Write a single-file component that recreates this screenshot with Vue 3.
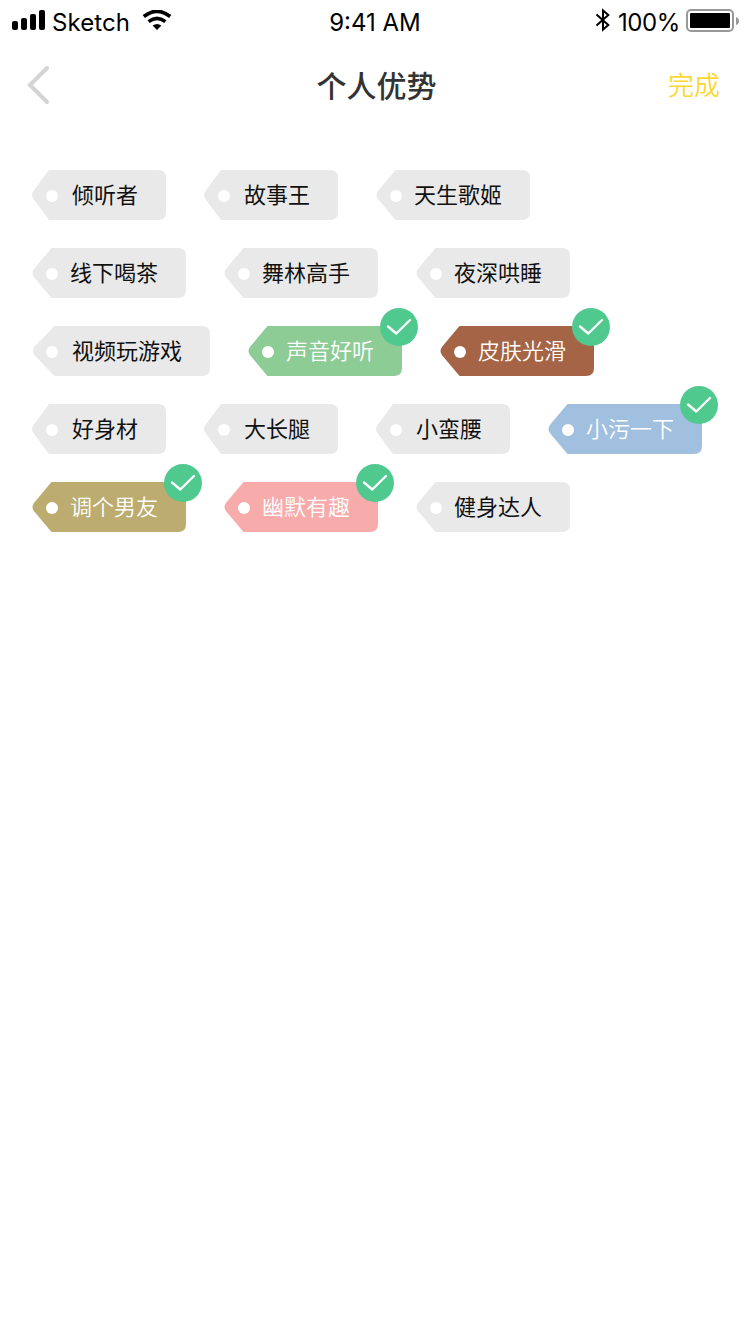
<script setup>
const rows = [
  [{ text: '倾听者' }, { text: '故事王' }, { text: '天生歌姬' }],
  [{ text: '线下喝茶' }, { text: '舞林高手' }, { text: '夜深哄睡' }],
  [{ text: '视频玩游戏' }, { text: '声音好听', color: '#8ecc95' }, { text: '皮肤光滑', color: '#a46445' }],
  [{ text: '好身材' }, { text: '大长腿' }, { text: '小蛮腰' }, { text: '小污一下', color: '#a1bfdf' }],
  [{ text: '调个男友', color: '#bcac6f' }, { text: '幽默有趣', color: '#f8abab' }, { text: '健身达人' }],
]

const sizes = {
  3: { width: 136, shoulder: 19, tip: 2, pad: 42 },
  4: { width: 156, shoulder: 21.5, tip: 2.5, pad: 40 },
  5: { width: 180, shoulder: 24.5, tip: 3, pad: 42 },
}
const sizeOf = (tag) => sizes[tag.text.length]

function outline(tag) {
  const { width: w, shoulder: s, tip: t } = sizeOf(tag)
  return `M${s} 0H${w - 8}Q${w} 0 ${w} 8V42Q${w} 50 ${w - 8} 50H${s}L${t + 1.8} 29.6Q${t - 1.8} 25 ${t + 1.8} 20.4Z`
}
</script>

<template>
  <main class="screen">
    <div class="status">
      <div class="side">
        <svg class="signal" width="34" height="20" viewBox="0 0 34 20">
          <rect x="0" y="11" width="6" height="9" rx="2" />
          <rect x="9" y="8" width="6" height="12" rx="2" />
          <rect x="18" y="4" width="6" height="16" rx="2" />
          <rect x="27" y="0" width="6" height="20" rx="2" />
        </svg>
        <span class="carrier">Sketch</span>
        <svg class="wifi" width="30" height="20" viewBox="0 0 30 20">
          <path d="M1.8 6.6Q15 -3.8 28.2 6.6" fill="none" stroke="#000" stroke-width="3.8" />
          <path d="M6.6 11.6Q15 5.1 23.4 11.6" fill="none" stroke="#000" stroke-width="3.6" />
          <path d="M10.6 15.6Q15 12.3 19.4 15.6L15 20Z" />
        </svg>
      </div>
      <span class="time">9:41 AM</span>
      <div class="side right">
        <svg class="bluetooth" width="16" height="24" viewBox="0 0 16 24">
          <path d="M1.5 6.5L13.3 17L8 21.5V2.5L13.3 7L1.5 17.5" fill="none" stroke="#000" stroke-width="2" />
        </svg>
        <span class="percent">100%</span>
        <svg class="battery" width="54" height="24" viewBox="0 0 54 24">
          <rect x="1" y="1" width="46" height="21" rx="4" fill="none" stroke="#999" stroke-width="2" />
          <rect x="4" y="4" width="40" height="15" rx="1" />
          <path d="M50 8Q53 9 53 12T50 16Z" fill="#999" />
        </svg>
      </div>
    </div>

    <header class="nav">
      <svg class="back" width="24" height="40" viewBox="0 0 24 40">
        <path d="M20 3L3 20L20 37" fill="none" stroke="#d4d4d4" stroke-width="4" stroke-linecap="round" />
      </svg>
      <h1>个人优势</h1>
      <span class="done">完成</span>
    </header>

    <section class="tags">
      <div v-for="(row, i) in rows" :key="i" class="row">
        <div
          v-for="tag in row"
          :key="tag.text"
          class="tag"
          :class="{ selected: tag.color }"
          :style="{ width: sizeOf(tag).width + 'px', paddingLeft: sizeOf(tag).pad + 'px' }"
        >
          <svg class="shape" :width="sizeOf(tag).width" height="50">
            <path :d="outline(tag)" :fill="tag.color || '#e9e9e9'" />
            <circle cx="22" cy="26" r="6" fill="#fff" />
          </svg>
          <span class="label">{{ tag.text }}</span>
          <svg v-if="tag.color" class="check" width="38" height="38" viewBox="0 0 38 38">
            <circle cx="19" cy="19" r="19" fill="#50c98e" />
            <path d="M8 18.5L16.3 25.5L30 12" fill="none" stroke="#fff" stroke-width="2.4" stroke-linecap="round" stroke-linejoin="round" />
          </svg>
        </div>
      </div>
    </section>
  </main>
</template>

<style>
body {
  margin: 0;
  background: #fff;
}
</style>

<style scoped>
.screen {
  width: 750px;
  height: 1334px;
  overflow: hidden;
  background: #fff;
  font-family: Inter, "Noto Sans CJK SC", sans-serif;
}
.status {
  display: grid;
  grid-template-columns: 1fr auto 1fr;
  height: 40px;
  color: #000;
  font-size: 24px;
  line-height: 45px;
}
.side {
  display: flex;
  align-items: flex-start;
  padding-left: 12px;
}
.right {
  justify-content: flex-end;
  padding: 0 10px 0 0;
}
.signal {
  margin-top: 10px;
}
.carrier {
  margin-left: 6px;
  letter-spacing: 0.1px;
}
.wifi {
  margin: 10px 0 0 12px;
}
.bluetooth {
  margin: 8px 7px 0 0;
}
.percent {
  letter-spacing: -0.4px;
}
.battery {
  margin: 9px 0 0 6px;
}
.nav {
  display: grid;
  grid-template-columns: 1fr auto 1fr;
  align-items: center;
  height: 88px;
  padding: 0 30px 0 27px;
  font-family: "Noto Sans CJK SC", sans-serif;
}
.back {
  margin-top: 2px;
}
h1 {
  margin: 0 -3px 0 3px;
  color: #333;
  font-size: 30px;
  font-weight: 450;
  line-height: 44px;
}
.done {
  justify-self: end;
  margin-top: -2px;
  color: #fad732;
  font-size: 26px;
  font-weight: 350;
}
.tags {
  display: flex;
  flex-direction: column;
  gap: 28px;
  padding: 42px 0 0 30px;
}
.row {
  display: flex;
  gap: 36px;
}
.tag {
  position: relative;
  box-sizing: border-box;
  height: 50px;
  color: #111;
  font-family: "Noto Sans CJK SC", sans-serif;
  font-size: 22px;
  line-height: 47px;
  white-space: nowrap;
}
.shape {
  position: absolute;
  top: 0;
  left: 0;
}
.label {
  position: relative;
}
.selected {
  color: #fff;
  font-weight: 350;
}
.check {
  position: absolute;
  top: -18px;
  right: -16px;
}
</style>
